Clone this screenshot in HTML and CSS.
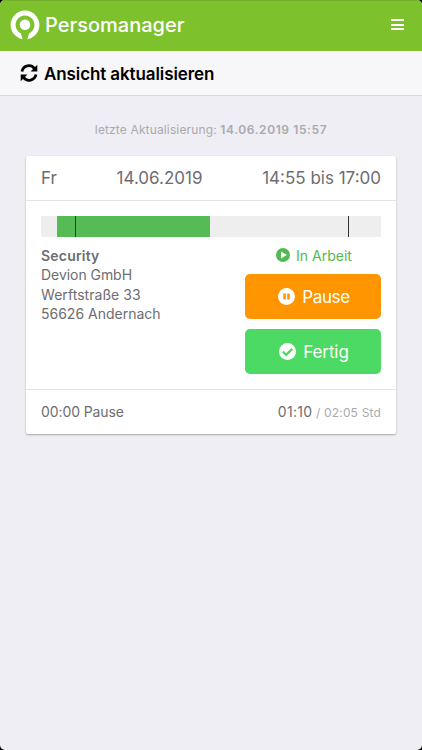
FILE: index.html
```
<!DOCTYPE html>
<html lang="de">
<head>
<meta charset="utf-8">
<title>Persomanager</title>
<link rel="stylesheet" href="styles.css">
</head>
<body>
<div class="app">
  <header class="topbar">
    <svg class="logo" viewBox="0 0 30 30">
      <path d="M12.7 29.3L9.2 28.2A14.4 14.4 0 1 1 20.8 28.2L17.3 29.3L19.1 23.4A9.4 9.4 0 1 0 10.9 23.4z" fill="#fff"/>
      <circle cx="15" cy="14.7" r="5.3" fill="#fff"/>
    </svg>
    <span class="brand">Persomanager</span>
    <span class="menu"><i></i><i></i><i></i></span>
  </header>
  <div class="refresh">
    <svg class="refresh-icon" viewBox="0 0 18 18">
      <path d="M2 7.4A7 7 0 0 1 14.5 4.6M16 10.6A7 7 0 0 1 3.5 13.4" fill="none" stroke="#000" stroke-width="2.8"/>
      <path d="M17.3 .8V7.5H10.6zM.7 17.2V10.5H7.4z"/>
    </svg>
    <span class="refresh-text">Ansicht aktualisieren</span>
  </div>
  <main>
    <p class="updated">letzte Aktualisierung: <b>14.06.2019 15:57</b></p>
    <section class="card">
      <div class="card-head"><span class="day">Fr</span><span class="date">14.06.2019</span><span class="time">14:55 bis 17:00</span></div>
      <div class="card-body">
        <div class="timeline"><div class="gap"></div><div class="done"><div class="mark start"></div></div><div class="rest"><div class="mark end"></div></div></div>
        <div class="details">
          <div class="address"><b>Security</b><span class="company">Devion GmbH</span><span class="street">Werftstraße 33</span><span class="city">56626 Andernach</span></div>
          <div class="actions">
            <div class="status"><svg viewBox="0 0 14 14"><circle cx="7" cy="7" r="7" fill="#53b953"/><path d="M5 3.6L10.8 7L5 10.4z" fill="#fff"/></svg><span>In Arbeit</span></div>
            <button class="btn pause"><svg viewBox="0 0 17 17"><circle cx="8.5" cy="8.5" r="8.5" fill="#fff"/><path d="M5.3 5.4h2.5v6.2H5.3zM9.2 5.4h2.5v6.2H9.2z" fill="#ff9500"/></svg><span>Pause</span></button>
            <button class="btn finish"><svg viewBox="0 0 17 17"><circle cx="8.5" cy="8.5" r="8.5" fill="#fff"/><path d="M3.9 8.6L7.2 11.9L13.2 5.9" fill="none" stroke="#4cd964" stroke-width="2.2"/></svg><span>Fertig</span></button>
          </div>
        </div>
      </div>
      <div class="card-foot"><span class="break">00:00 Pause</span><span class="total"><span class="worked">01:10</span><small> / 02:05 Std</small></span></div>
    </section>
  </main>
</div>
</body>
</html>
```
FILE: styles.css
```
* { box-sizing: border-box; }
body { margin: 0; background: #000; font-family: Inter, "Liberation Sans", sans-serif; color: #6d6d72; }
.app { height: 750px; overflow: hidden; background: #efeef4; border-radius: 5px; white-space: nowrap; }
.topbar { height: 51px; background: #7dc12d; border-top: 1px solid #74b02c; display: flex; align-items: center; padding: 0 18px 0 10px; }
.logo { width: 30px; height: 30px; margin-top: -2px; }
.brand { margin-left: 5px; margin-top: -2px; color: #fff; font-size: 20px; font-weight: 500; line-height: 24px; }
.menu { margin-left: auto; width: 13px; display: grid; gap: 2.5px; margin-top: -3px; }
.menu i { height: 2px; background: #fff; }
.refresh { height: 45px; background: #f7f7f9; border-bottom: 1px solid #d8d8dc; display: flex; align-items: center; padding-left: 20px; color: #000; font-size: 17px; font-weight: 600; }
.refresh-icon { width: 18px; height: 18px; margin: 0 6px 1px 0; }
.refresh-text { letter-spacing: -.1px; padding-top: 1px; }
.updated { margin: 25px 0 18px; text-align: center; font-size: 12px; line-height: 17px; color: #aaaaae; letter-spacing: .14px; }
.updated b { font-weight: 600; letter-spacing: .6px; }
.card { width: 370px; height: 278px; margin: 0 26px; background: #fff; border-radius: 2px; box-shadow: 0 1px 2px rgba(0,0,0,.3); display: flex; flex-direction: column; }
.card-head { height: 45px; padding: 0 15px; border-bottom: 1px solid #e4e4e6; display: flex; align-items: center; justify-content: space-between; font-size: 17px; }
.card-body { padding: 15px 15px 0; flex: 1; }
.timeline { height: 21px; background: #eee; display: flex; }
.gap { width: 16px; }
.done { width: 153px; background: #55bb55; padding-left: 18px; }
.rest { padding-left: 138px; }
.mark { width: 1px; height: 21px; background: #333; }
.details { display: flex; justify-content: space-between; padding-top: 9px; }
.address { display: flex; flex-direction: column; font-size: 14px; line-height: 19.4px; }
.address b { font-weight: 600; letter-spacing: .2px; }
.company { letter-spacing: -.05px; }
.street { letter-spacing: .05px; }
.actions { width: 136px; }
.status { display: flex; align-items: center; justify-content: center; gap: 6px; height: 18px; margin-bottom: 10px; padding-left: 2px; color: #53b953; font-size: 14px; }
.status svg { width: 14px; height: 14px; }
.btn { width: 136px; height: 45px; margin: 0 0 10px; padding: 0; border: 0; border-radius: 5px; color: #fff; font: 17px Inter, sans-serif; display: flex; justify-content: center; align-items: center; gap: 7px; }
.btn svg { width: 17px; height: 17px; }
.btn span { letter-spacing: -.4px; }
.btn.finish span { letter-spacing: -.1px; }
.pause { background: #ff9500; padding-left: 2px; }
.finish { background: #4cd964; padding-left: 2px; }
.card-foot { height: 45px; border-top: 1px solid #e4e4e6; padding: 0 15px 2px; display: flex; align-items: center; justify-content: space-between; font-size: 14px; }
.break { letter-spacing: -.1px; }
.worked { letter-spacing: .3px; }
.card-foot small { font-size: 12px; color: #aaaaae; white-space: pre; letter-spacing: .17px; }
```
